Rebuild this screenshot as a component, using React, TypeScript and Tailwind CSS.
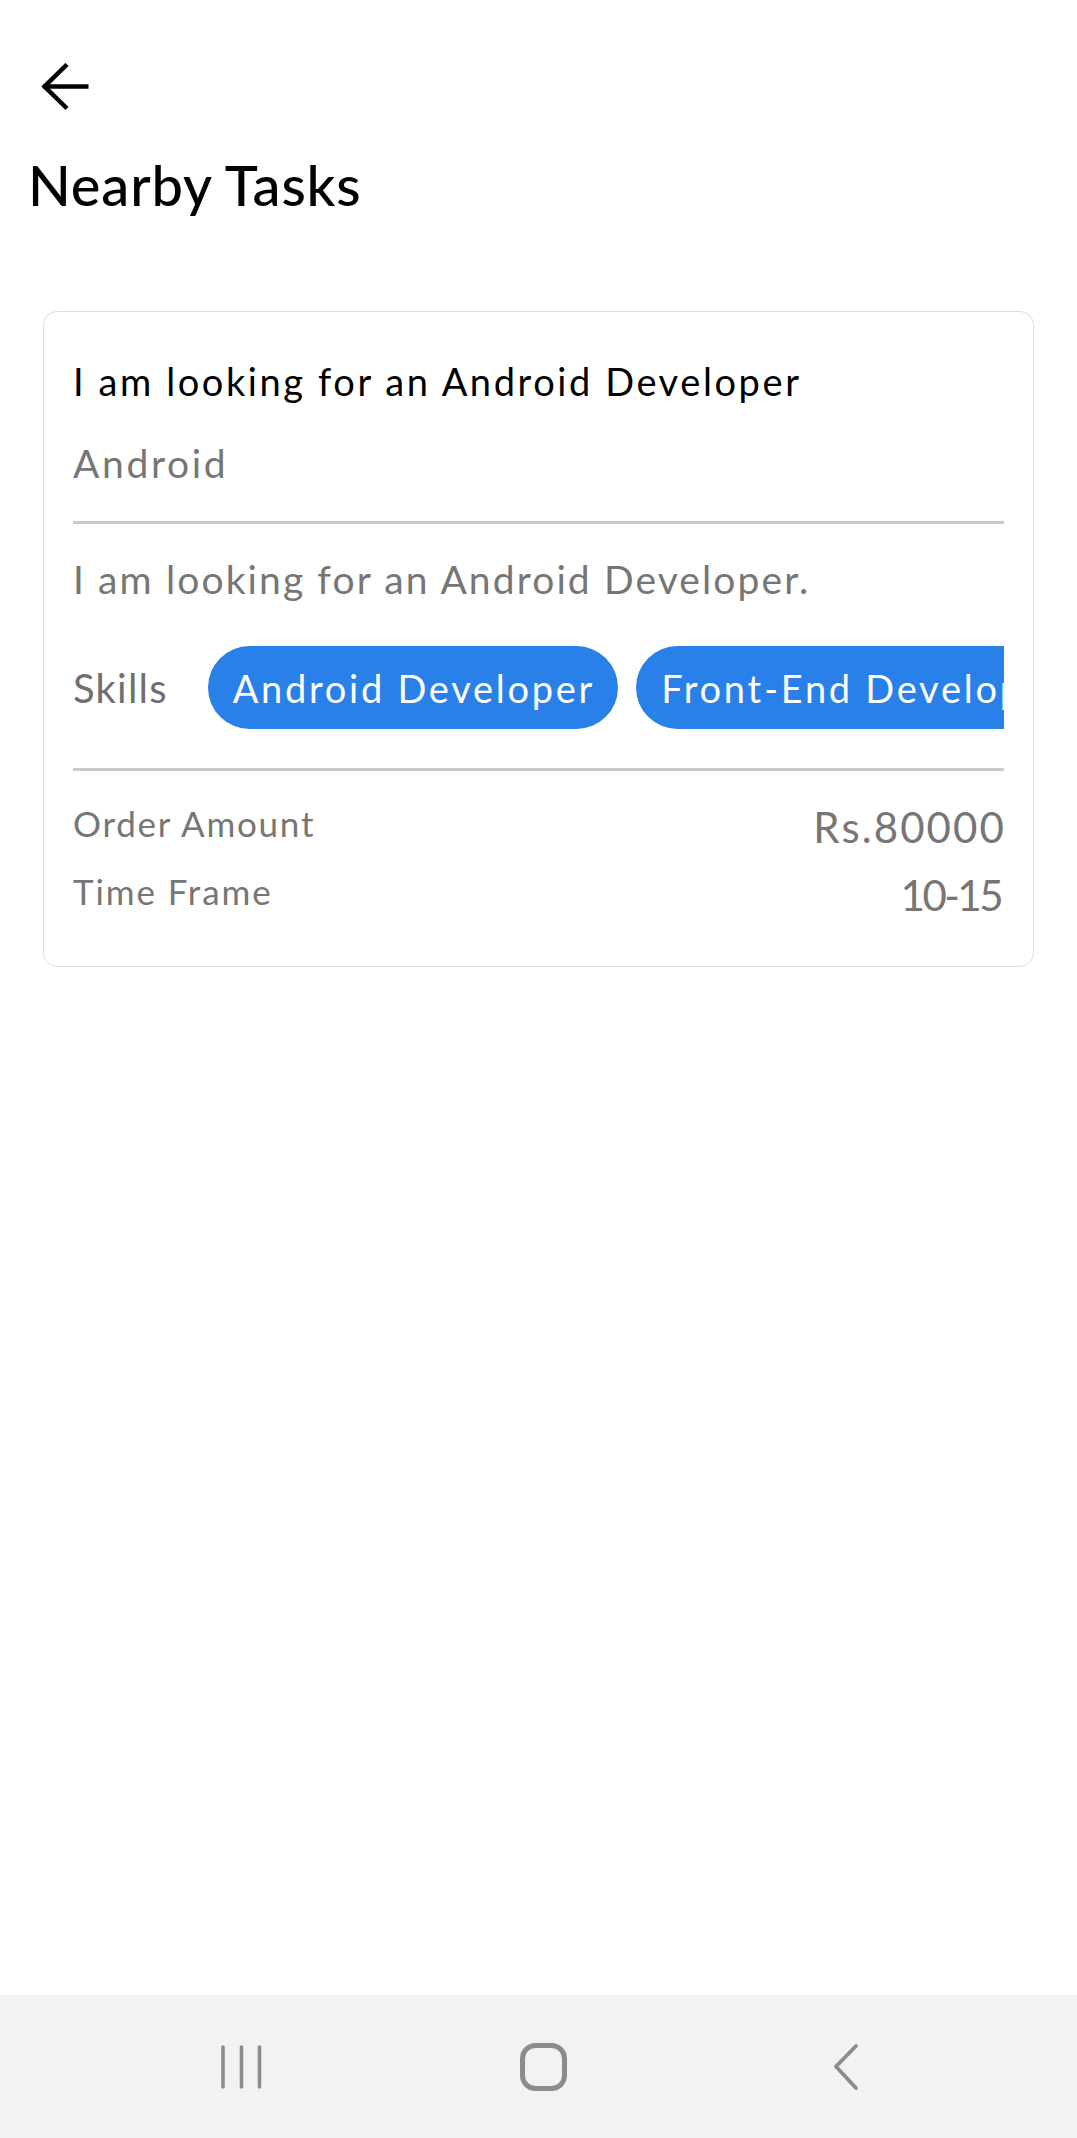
import React from "react";

const font = { fontFamily: "Lato, 'Noto Sans', sans-serif" };

const BackArrow = () => (
  <svg width="50" height="48" viewBox="0 0 50 48" fill="none">
    <path d="M2 23.5 H47.5" stroke="#000" strokeWidth="4.5" />
    <path d="M26 1.5 L3.5 23.5 L26 45.5" stroke="#000" strokeWidth="4.5" />
  </svg>
);

const NavBar = () => (
  <div className="flex h-[143px] w-full items-center bg-[#f2f2f2] pl-[91px]">
    <div className="flex w-[302px] justify-center">
      <svg width="44" height="46" viewBox="0 0 44 46" fill="none">
        <path d="M3 3 V43 M21.5 3 V43 M39.5 3 V43" stroke="#8c8c8c" strokeWidth="3.6" strokeLinecap="round" />
      </svg>
    </div>
    <div className="flex w-[302px] justify-center">
      <svg width="50" height="50" viewBox="0 0 50 50" fill="none">
        <rect x="3.5" y="3.5" width="42" height="43" rx="13" stroke="#8c8c8c" strokeWidth="5" />
      </svg>
    </div>
    <div className="flex w-[302px] justify-center">
      <svg width="30" height="48" viewBox="0 0 30 48" fill="none">
        <path d="M25 3 L5 23.5 L25 45" stroke="#8c8c8c" strokeWidth="3.8" strokeLinecap="round" strokeLinejoin="round" />
      </svg>
    </div>
  </div>
);

const skills = ["Android Developer", "Front-End Developer"];

export default function App() {
  return (
    <div className="flex min-h-[2138px] w-full flex-col bg-white" style={font}>
      <div className="flex flex-1 flex-col">
        <div className="pl-[41px] pt-[63px]">
          <BackArrow />
        </div>
        <h1 className="mt-[46px] pl-[28px] text-[56px] font-medium leading-none tracking-[0.015em] text-black">
          Nearby Tasks
        </h1>
        <div className="mx-[43px] mt-[98px] rounded-[14px] border border-[#dedede] px-[29px] pb-[50px] pt-[50px]">
          <div className="text-[38px] leading-none tracking-[0.068em] text-black">
            I am looking for an Android Developer
          </div>
          <div className="mt-[44px] text-[39px] leading-none tracking-[0.068em] text-[#767676]">Android</div>
          <div className="mt-[38px] h-[3px] bg-[#c8c8c8]" />
          <div className="mt-[36px] text-[39px] leading-none tracking-[0.054em] text-[#767676]">
            I am looking for an Android Developer.
          </div>
          <div className="mt-[47px] flex items-center overflow-hidden">
            <span className="mr-[40px] shrink-0 text-[40px] leading-none tracking-[0.03em] text-[#6f6f6f]">Skills</span>
            <div className="flex gap-[18px]">
              {skills.map((s) => (
                <span
                  key={s}
                  className="flex h-[83px] shrink-0 items-center whitespace-nowrap rounded-full bg-[#2a80e9] pl-[25px] pr-[23px] text-[38px] leading-none tracking-[0.072em] text-white"
                >
                  {s}
                </span>
              ))}
            </div>
          </div>
          <div className="mt-[39px] h-[3px] bg-[#c8c8c8]" />
          <div className="mt-[35px] flex items-start justify-between">
            <span className="text-[35px] leading-none tracking-[0.05em] text-[#767676]">Order Amount</span>
            <span className="-mr-[2px] text-[42px] leading-none tracking-[0.05em] text-[#767676]">Rs.80000</span>
          </div>
          <div className="mt-[26px] flex items-start justify-between">
            <span className="text-[35px] leading-none tracking-[0.054em] text-[#767676]">Time Frame</span>
            <span className="mr-[3px] text-[42px] leading-none tracking-[-0.06em] text-[#767676]">10-15</span>
          </div>
        </div>
      </div>
      <NavBar />
    </div>
  );
}
